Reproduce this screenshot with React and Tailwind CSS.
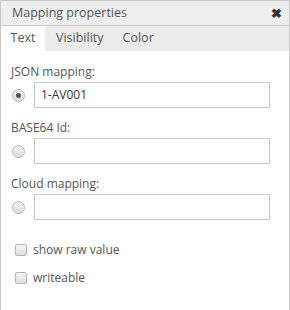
import React from "react";

function Radio({ checked }) {
  return (
    <span className="w-[13px] h-[13px] rounded-full border border-[#b5b5b5] bg-gradient-to-b from-[#f4f4f4] to-[#dcdcdc] flex items-center justify-center shrink-0">
      {checked && <span className="w-[5px] h-[5px] rounded-full bg-[#555]" />}
    </span>
  );
}

function Field({ label, value, checked }) {
  return (
    <div className="flex flex-col">
      <div className="h-[20px] flex items-center">{label}</div>
      <div className="flex items-center h-[26px]">
        <div className="w-[23px] pl-[1px] flex items-center">
          <Radio checked={checked} />
        </div>
        <div className="w-[236px] h-[26px] border border-[#c8c8c8] bg-white flex items-center px-[6px] text-[#333]">
          {value}
        </div>
      </div>
    </div>
  );
}

function Check({ label }) {
  return (
    <div className="flex items-center h-[28px]">
      <span className="ml-[4px] w-[12px] h-[12px] rounded-[2px] border border-[#b5b5b5] bg-gradient-to-b from-[#f6f6f6] to-[#dedede]" />
      <span className="ml-[6px]">{label}</span>
    </div>
  );
}

export default function App() {
  return (
    <div className="w-[290px] h-[310px] bg-white overflow-hidden font-['Open_Sans',sans-serif] text-[12px] text-[#555]">
      <div className="h-full border-l border-r border-t border-[#c8c8c8] flex flex-col">
        <div className="h-[25px] bg-[#eeeeee] border-b border-[#c8c8c8] flex items-center justify-between pl-[11px] pr-[7px]">
          <span className="text-[12.5px]">Mapping properties</span>
          <span className="text-[#333] text-[13px] font-bold leading-none">✖</span>
        </div>
        <div className="h-[25px] bg-[#ebebeb] flex items-stretch text-[12.5px]">
          <div className="w-[44px] bg-white flex items-center justify-center">Text</div>
          <div className="pl-[11px] flex items-center">Visibility</div>
          <div className="pl-[19px] flex items-center">Color</div>
        </div>
        <div className="pl-[10px] pt-[11px] flex flex-col gap-[10px]">
          <Field label="JSON mapping:" value="1-AV001" checked />
          <Field label="BASE64 Id:" value="" />
          <Field label="Cloud mapping:" value="" />
          <div className="mt-[6px] flex flex-col">
            <Check label="show raw value" />
            <Check label="writeable" />
          </div>
        </div>
      </div>
    </div>
  );
}
